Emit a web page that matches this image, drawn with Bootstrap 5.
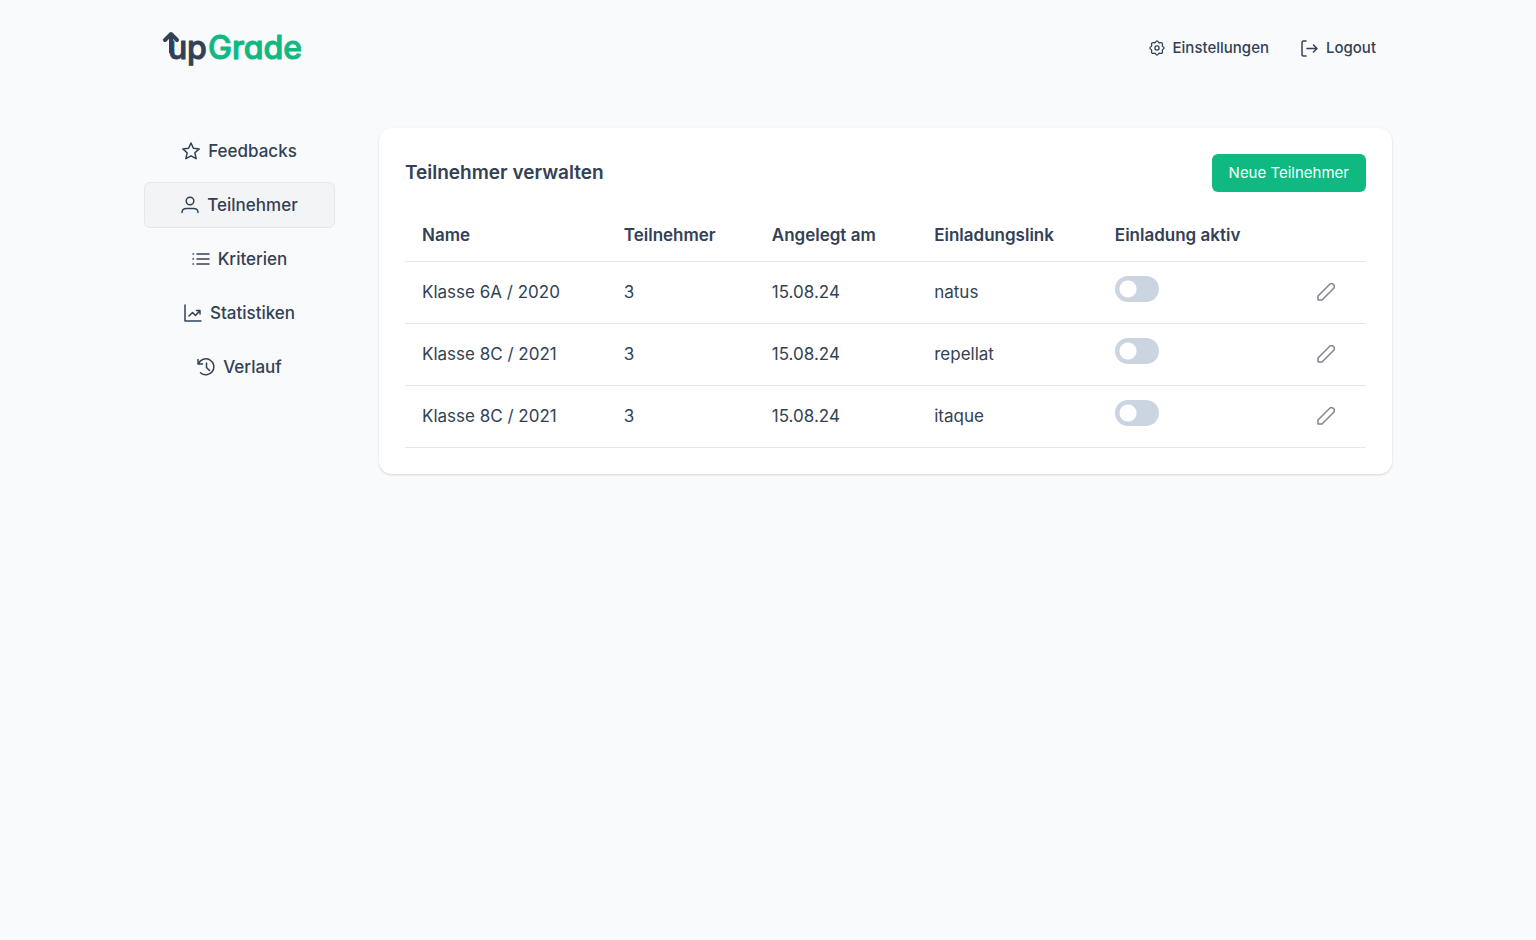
<!DOCTYPE html>
<html lang="de">
<head>
<meta charset="utf-8">
<meta name="viewport" content="width=device-width, initial-scale=1">
<title>upGrade – Teilnehmer verwalten</title>
<link href="https://cdn.jsdelivr.net/npm/bootstrap@5.3.0/dist/css/bootstrap.min.css" rel="stylesheet">
<style>
:root { --ink: #334155; --brand: #10b981; --line: #e5e7eb; }
body { font-family: Inter, "Liberation Sans", sans-serif; font-size: 17px; line-height: 26px; color: var(--ink); background: #f9fafc; }
a { color: inherit; text-decoration: none; }
svg.ico { fill: none; stroke: currentColor; stroke-width: 1.5; stroke-linecap: round; stroke-linejoin: round; flex: none; }
svg.ico.gear { stroke-width: 1.3; }
.page { max-width: 1248px; min-height: 100vh; }
.topbar { height: 96px; padding: 0 16px; }
.brand-logo text { font-family: Inter, sans-serif; font-feature-settings: "cv11"; font-size: 32px; font-weight: 500; stroke-width: 1; stroke-linejoin: round; }
.top-link { font-size: 15px; line-height: 28px; font-weight: 500; }
.layout { padding: 32px 0; gap: 44px; }
.side { width: 191px; gap: 8px; flex: none; }
.side .nav-link { height: 46px; padding: 0 12px; gap: 8px; border: 1px solid transparent; border-radius: 6px; color: var(--ink); font-weight: 500; font-size: 17px; }
.side .nav-link.active { background: #f3f4f6; border-color: var(--line); }
.panel { min-width: 0; background: #fff; border-radius: 13px; padding: 26px; box-shadow: 0 1px 3px rgba(0,0,0,.1), 0 1px 2px rgba(0,0,0,.06); }
.panel h1 { font-size: 19px; line-height: 28px; font-weight: 600; }
.btn-brand { --bs-btn-bg: var(--brand); --bs-btn-color: #fff; --bs-btn-hover-bg: #059669; --bs-btn-hover-color: #fff; --bs-btn-active-bg: #059669; --bs-btn-active-color: #fff; height: 38px; padding: 0 17px; border: 0; border-radius: 6px; font-size: 15px; line-height: 24px; }
.people { --bs-table-bg: transparent; --bs-table-color: var(--ink); margin: 16px 0 0; table-layout: fixed; color: var(--ink); border-color: var(--line); }
.people > :not(caption) > * > * { padding: 0 0 0 17px; vertical-align: middle; border-bottom: 1px solid var(--line); }
.people > thead > tr > th { height: 53px; padding-top: 2px; font-weight: 600; }
.people td { height: 62px; }
.people .form-switch { padding: 0; margin: 0 0 7px; min-height: 0; line-height: 0; }
.people .form-check-input { float: none; width: 44px; height: 26px; margin: 0; border: 0; border-radius: 13px; background: #cbd5e1 radial-gradient(circle at 13px 13px, #fff 8px, transparent 9px) no-repeat; }
.people .form-check-input:checked { background: var(--brand) radial-gradient(circle at 31px 13px, #fff 8px, transparent 9px) no-repeat; }
.edit { color: #808590; display: block; line-height: 0; }
</style>
</head>
<body>
<div class="page container-fluid p-0">
  <header class="topbar d-flex justify-content-between align-items-center">
    <a href="#" class="brand-logo" aria-label="upGrade">
      <svg width="142" height="40" viewBox="0 0 142 40" class="d-block">
        <text x="8 27" y="31" fill="#334155" stroke="#334155">up</text>
        <path d="M11 24V7M5 12l6-6 6 6" fill="none" stroke="#334155" stroke-width="4" stroke-linecap="round" stroke-linejoin="round"/>
        <text x="48" y="31" fill="#10b981" stroke="#10b981">Grade</text>
      </svg>
    </a>
    <nav class="d-flex gap-4" aria-label="Konto">
      <a href="#" class="top-link d-flex align-items-center gap-2 me-2">
        <svg class="ico gear" width="16" height="16" viewBox="0 0 16 16"><circle cx="8" cy="8" r="2.100"/><path d="M6.500 2.200Q8-.4 9.500 2.200Q10 3 11 2.600Q13.900 2.100 13.400 5Q13 6 13.800 6.500Q16.400 8 13.800 9.500Q13 10 13.400 11Q13.900 13.900 11 13.400Q10 13 9.500 13.800Q8 16.400 6.500 13.800Q6 13 5 13.400Q2.100 13.900 2.600 11Q3 10 2.200 9.500Q-.4 8 2.200 6.500Q3 6 2.600 5Q2.100 2.100 5 2.600Q6 3 6.500 2.200z"/></svg>
        Einstellungen
      </a>
      <a href="#" class="top-link d-flex align-items-center gap-2">
        <svg class="ico" width="17" height="17" viewBox="0 0 17 17"><path d="M5 1H2.500Q1 1 1 2.500v12Q1 16 2.500 16H5M6 8.500h10M12.500 5L16 8.500 12.500 12"/></svg>
        Logout
      </a>
    </nav>
  </header>
  <div class="layout d-flex align-items-start">
    <nav class="side nav flex-column" aria-label="Hauptmenü">
      <a href="#" class="nav-link d-flex align-items-center justify-content-center">
        <svg class="ico" width="18" height="18" viewBox="0 0 18 18"><path d="M9 1l2.400 5.200 5.800.7-4.300 3.900L14.100 16.700 9 13.800 3.900 16.700l1.200-5.900L.8 6.900l5.800-.7z"/></svg>
        Feedbacks</a>
      <a href="#" class="nav-link active d-flex align-items-center justify-content-center" aria-current="page">
        <svg class="ico" width="18" height="18" viewBox="0 0 18 18"><circle cx="9" cy="5" r="3.800"/><path d="M1 16.500Q1 12.500 5.500 12.500h7q4.500 0 4.500 4"/></svg>
        Teilnehmer</a>
      <a href="#" class="nav-link d-flex align-items-center justify-content-center">
        <svg class="ico" width="18" height="18" viewBox="0 0 18 18"><path d="M5 4h12M5 9h12M5 14h12M1 4h.5M1 9h.5M1 14h.5"/></svg>
        Kriterien</a>
      <a href="#" class="nav-link d-flex align-items-center justify-content-center">
        <svg class="ico" width="18" height="18" viewBox="0 0 18 18"><path d="M1 1v16h16M5 12l3.500-3.500 3 3 4.500-5M12.500 6.500H16V10"/></svg>
        Statistiken</a>
      <a href="#" class="nav-link d-flex align-items-center justify-content-center">
        <svg class="ico" width="18" height="18" viewBox="0 0 18 18"><path d="M1 1.500V6h4.500M1.500 5.700A8 8 0 1 1 3.500 14.800M9.500 5v4.500l3 3"/></svg>
        Verlauf</a>
    </nav>
    <main class="panel flex-grow-1">
      <div class="d-flex justify-content-between align-items-center">
        <h1 class="m-0">Teilnehmer verwalten</h1>
        <button type="button" class="btn btn-brand">Neue Teilnehmer</button>
      </div>
      <table class="table people">
        <colgroup><col style="width:21%"><col style="width:15.400%"><col style="width:16.900%"><col style="width:18.800%"><col style="width:21%"><col></colgroup>
        <thead>
          <tr><th scope="col">Name</th><th scope="col">Teilnehmer</th><th scope="col">Angelegt am</th><th scope="col">Einladungslink</th><th scope="col">Einladung aktiv</th><th></th></tr>
        </thead>
        <tbody>
          <tr><td>Klasse 6A / 2020</td><td>3</td><td>15.08.24</td><td>natus</td>
            <td><div class="form-check form-switch"><input class="form-check-input" type="checkbox" role="switch" aria-label="Einladung natus aktiv"></div></td>
            <td><button type="button" class="edit btn p-0 border-0" aria-label="Bearbeiten"><svg class="ico" width="18" height="18" viewBox="0 0 18 18"><path d="M1 17v-4L12.500 1.500a2.500 2.500 0 0 1 4 4L5 17z"/></svg></button></td></tr>
          <tr><td>Klasse 8C / 2021</td><td>3</td><td>15.08.24</td><td>repellat</td>
            <td><div class="form-check form-switch"><input class="form-check-input" type="checkbox" role="switch" aria-label="Einladung repellat aktiv"></div></td>
            <td><button type="button" class="edit btn p-0 border-0" aria-label="Bearbeiten"><svg class="ico" width="18" height="18" viewBox="0 0 18 18"><path d="M1 17v-4L12.500 1.500a2.500 2.500 0 0 1 4 4L5 17z"/></svg></button></td></tr>
          <tr><td>Klasse 8C / 2021</td><td>3</td><td>15.08.24</td><td>itaque</td>
            <td><div class="form-check form-switch"><input class="form-check-input" type="checkbox" role="switch" aria-label="Einladung itaque aktiv"></div></td>
            <td><button type="button" class="edit btn p-0 border-0" aria-label="Bearbeiten"><svg class="ico" width="18" height="18" viewBox="0 0 18 18"><path d="M1 17v-4L12.500 1.500a2.500 2.500 0 0 1 4 4L5 17z"/></svg></button></td></tr>
        </tbody>
      </table>
    </main>
  </div>
</div>
<script src="https://cdn.jsdelivr.net/npm/bootstrap@5.3.0/dist/js/bootstrap.bundle.min.js"></script>
</body>
</html>
